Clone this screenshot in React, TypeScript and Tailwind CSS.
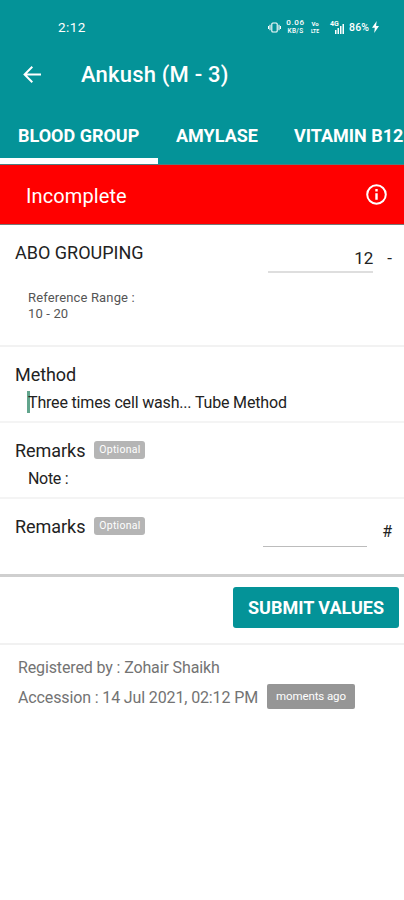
import React from "react";

function StatusIcons() {
  return (
    <div className="flex items-center text-white">
      <svg width="13" height="11" viewBox="0 0 13 11" fill="none" stroke="currentColor" strokeWidth="1.1">
        <rect x="3.8" y="1" width="5.4" height="9" rx="1" />
        <path d="M2 2.8v5.4M.5 4v3M11 2.8v5.4M12.5 4v3" />
      </svg>
      <div className="ml-[5px] flex w-[19px] flex-col items-center font-medium">
        <span className="text-[8px] leading-[8px] tracking-[0.6px]">0.06</span>
        <span className="text-[6.5px] leading-[8px] tracking-[0.3px]">KB/S</span>
      </div>
      <div className="ml-[5px] flex w-[10px] flex-col items-center font-bold">
        <span className="text-[6px] leading-[8px]">Vo</span>
        <span className="text-[5px] leading-[7px]">LTE</span>
      </div>
      <div className="ml-[10px] flex h-[13px] w-[14px] items-end">
        <span className="self-start text-[7px] leading-[7px] font-bold">4G</span>
        <svg className="-ml-[4px] shrink-0" width="9" height="10" viewBox="0 0 9 10" fill="currentColor">
          <path d="M0 6h1.5v4H0zM2.5 4H4v6H2.5zM5 2h1.5v8H5zM7.5 0H9v10H7.5z" />
        </svg>
      </div>
      <span className="ml-[5px] w-[22px] text-[10.5px] leading-[13px] font-medium tracking-[0.2px]">86%</span>
      <svg className="ml-[1px]" width="7" height="12" viewBox="0 0 7 12" fill="currentColor">
        <path d="M4.7 0 0 6.7h2.8L2.2 12 7 5H4.1z" />
      </svg>
    </div>
  );
}

function Optional() {
  return (
    <span className="ml-[9px] flex h-[18px] w-[51px] items-center justify-center rounded-[3px] bg-[#b5b5b5] text-[10.5px] tracking-[0.25px] text-white">
      Optional
    </span>
  );
}

export default function App() {
  return (
    <div className="h-[900px] w-[404px] overflow-hidden bg-white font-['Roboto',sans-serif] whitespace-nowrap text-[#222]">
      <header className="h-[165px] border-b border-[#4d7d80] bg-[#049398] text-white">
        <div className="flex h-[54px] items-center justify-between pr-[25px] pl-[58px]">
          <span className="text-[13.5px] tracking-[0.45px]">2:12</span>
          <StatusIcons />
        </div>
        <div className="flex h-[40px] items-center pl-[23px]">
          <svg width="18" height="17" viewBox="0 0 18 17" fill="none" stroke="currentColor" strokeWidth="2">
            <path d="M18 8.5H1.5M9.3.8 1.6 8.5l7.7 7.7" />
          </svg>
          <h1 className="mt-[2px] ml-[40px] text-[22px] leading-[28px] font-medium tracking-[0.2px]">Ankush (M - 3)</h1>
        </div>
        <nav className="flex h-[70px] text-[18px] font-bold">
          <div className="w-[158px] border-b-[6px] border-white pt-[28px] pl-[18px] leading-[28px]">BLOOD GROUP</div>
          <div className="w-[118px] pt-[28px] pl-[18px] leading-[28px]">AMYLASE</div>
          <div className="pt-[28px] pl-[18px] leading-[28px]">VITAMIN B12</div>
        </nav>
      </header>

      <div className="flex h-[60px] items-center justify-between border-b border-[#777] bg-[#ff0000] pr-[17px] pl-[26px] text-white">
        <span className="mt-[2px] text-[20px] tracking-[0.1px]">Incomplete</span>
        <svg width="21" height="21" viewBox="0 0 21 21" fill="none" stroke="currentColor" strokeWidth="2">
          <circle cx="10.5" cy="10.5" r="9.3" />
          <path d="M10.5 5v2.4M10.5 9.2v6.6" strokeWidth="2.4" />
        </svg>
      </div>

      <section className="flex h-[122px] justify-between border-b-2 border-[#f2f2f2] pl-[15px]">
        <div>
          <h2 className="mt-[16px] text-[18px] leading-[24px]">ABO GROUPING</h2>
          <p className="mt-[25px] ml-[13px] text-[13px] leading-[16px] tracking-[0.15px] text-[#555]">
            Reference Range :<br />10 - 20
          </p>
        </div>
        <div className="flex pr-[12px] text-[17px] leading-[24px]">
          <div className="mt-[21px] h-[27px] w-[105px] border-b-2 border-[#dedede] text-right">12</div>
          <span className="mt-[21px] ml-[14px]">-</span>
        </div>
      </section>

      <section className="h-[76px] border-b-2 border-[#f4f4f4] pt-[16px] pl-[15px]">
        <h2 className="text-[18px] leading-[24px] tracking-[-0.05px]">Method</h2>
        <div className="mt-[4px] ml-[12px] flex h-[22px] items-center border-l-[3px] border-[#62a58d] text-[16px]">
          <span className="mt-[2px] -ml-[2px] tracking-[-0.17px]">Three times cell wash... Tube Method</span>
        </div>
      </section>

      <section className="h-[76px] border-b-2 border-[#f4f4f4] pt-[15px] pl-[15px]">
        <div className="flex h-[24px] items-center">
          <h2 className="text-[18px] tracking-[-0.05px]">Remarks</h2>
          <Optional />
        </div>
        <p className="mt-[6px] ml-[13px] text-[16px] leading-[22px] tracking-[-0.3px]">Note :</p>
      </section>

      <section className="flex h-[78px] justify-between border-b-[3px] border-[#cfcfcf] pt-[15px] pr-[12px] pl-[15px]">
        <div className="flex h-[24px] items-center">
          <h2 className="text-[18px] tracking-[-0.05px]">Remarks</h2>
          <Optional />
        </div>
        <div className="flex">
          <div className="h-[33px] w-[104px] border-b border-[#bcbcbc]" />
          <span className="mt-[6px] ml-[15px] text-[16px] leading-[24px]">#</span>
        </div>
      </section>

      <div className="flex h-[68px] justify-end border-b-2 border-[#f1f1f1] pt-[10px] pr-[5px]">
        <button className="h-[41px] w-[166px] rounded-[3px] bg-[#049398] text-[18px] font-bold text-white">SUBMIT VALUES</button>
      </div>

      <footer className="pl-[18px] text-[16px] tracking-[-0.13px] text-[#737373]">
        <p className="mt-[11px] leading-[24px]">Registered by : Zohair Shaikh</p>
        <div className="mt-[4px] flex h-[25px] items-center">
          <span className="mt-[2px]">Accession : 14 Jul 2021, 02:12 PM</span>
          <span className="ml-[9px] flex h-[25px] w-[88px] items-center justify-center rounded-[2px] bg-[#969696] text-[11.5px] tracking-[-0.1px] text-white">moments ago</span>
        </div>
      </footer>
    </div>
  );
}
